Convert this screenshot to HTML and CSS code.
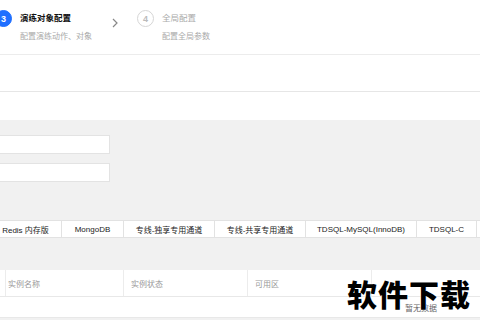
FILE: index.html
```html
<!DOCTYPE html>
<html lang="zh-CN">
<head>
    <meta charset="UTF-8">
    <meta name="viewport" content="width=device-width, initial-scale=1.0">
    <title>演练对象配置</title>
    <link rel="stylesheet" href="styles.css">
</head>
<body>
    <div class="steps">
        <div class="step step-active">
            <div class="step-num">3</div>
            <div class="step-text">
                <div class="step-title">演练对象配置</div>
                <div class="step-desc">配置演练动作、对象</div>
            </div>
        </div>
        <div class="step-arrow">
            <svg width="8" height="10" viewBox="0 0 8 10"><path d="M2 1 L6 5 L2 9" fill="none" stroke="#888" stroke-width="1.2"/></svg>
        </div>
        <div class="step">
            <div class="step-num">4</div>
            <div class="step-text">
                <div class="step-title">全局配置</div>
                <div class="step-desc">配置全局参数</div>
            </div>
        </div>
    </div>

    <div class="toolbar"></div>
    <div class="subbar"></div>

    <div class="main">
        <div class="field"></div>
        <div class="field"></div>

        <div class="tabs">
            <div class="tab tab-redis">Redis 内存版</div>
            <div class="tab tab-mongo">MongoDB</div>
            <div class="tab tab-line">专线-独享专用通道</div>
            <div class="tab tab-line">专线-共享专用通道</div>
            <div class="tab tab-tdsql">TDSQL-MySQL(InnoDB)</div>
            <div class="tab tab-tdsqlc">TDSQL-C</div>
            <div class="tab tab-more"></div>
        </div>

        <div class="table">
            <div class="table-head">
                <div class="th th-check"></div>
                <div class="th th-name">实例名称</div>
                <div class="th">实例状态</div>
                <div class="th">可用区</div>
                <div class="th th-rest"></div>
            </div>
            <div class="table-empty">暂无数据</div>
        </div>
    </div>

    <div class="watermark">软件下载</div>
</body>
</html>
```

FILE: styles.css
```css
body {
    font-family: 'Liberation Sans', 'Noto Sans CJK SC', sans-serif;
    margin: 0;
    padding: 0;
    width: 480px;
    height: 320px;
    overflow: hidden;
    background-color: #f1f1f1;
    color: #000;
    position: relative;
}

.steps {
    height: 55px;
    background-color: #fff;
    border-bottom: 1px solid #ececec;
    display: flex;
    align-items: flex-start;
    padding-top: 10px;
    box-sizing: border-box;
    margin-left: -5px;
}

.step {
    display: flex;
    gap: 8px;
}

.step-num {
    width: 15px;
    height: 15px;
    border-radius: 50%;
    border: 1px solid #d6d6d6;
    color: #bbb;
    font-size: 9px;
    font-weight: bold;
    display: flex;
    align-items: center;
    justify-content: center;
}

.step-active .step-num {
    background-color: #1f6fff;
    border-color: #1f6fff;
    color: #fff;
}

.step-title {
    font-size: 8.5px;
    line-height: 16px;
    color: #aaa;
}

.step-active .step-title {
    color: #111;
    font-weight: bold;
}

.step-desc {
    font-size: 8px;
    line-height: 12px;
    margin-top: 5px;
    color: #aaa;
}

.step-arrow {
    margin-left: 19px;
    margin-right: 18px;
    padding-top: 4px;
}

.toolbar {
    height: 36px;
    background-color: #fff;
    border-bottom: 1px solid #e6e6e6;
    box-shadow: 0 1px 2px rgba(0, 0, 0, 0.04);
}

.subbar {
    height: 28px;
    background-color: #fff;
}

.main {
    padding-top: 15px;
}

.field {
    width: 109px;
    height: 17px;
    background-color: #fff;
    border: 1px solid #e3e3e3;
    border-left: none;
    margin-bottom: 9px;
}

.tabs {
    display: flex;
    margin-top: 38px;
    margin-left: -10px;
}

.tab {
    height: 18px;
    box-sizing: border-box;
    background-color: #fff;
    border: 1px solid #e2e2e2;
    border-left: none;
    font-size: 8px;
    color: #222;
    display: flex;
    align-items: center;
    justify-content: center;
    flex-shrink: 0;
}

.tab-redis { width: 72px; }
.tab-mongo { width: 62px; }
.tab-line { width: 91px; }
.tab-tdsql { width: 111px; }
.tab-tdsqlc { width: 60px; }
.tab-more { width: 40px; }

.table {
    width: 842px;
    margin-top: 32px;
    background-color: #fff;
}

.table-head {
    display: flex;
    height: 26px;
    border-bottom: 1px solid #e8e8e8;
}

.th {
    width: 124px;
    box-sizing: border-box;
    border-left: 1px solid #ececec;
    font-size: 8px;
    color: #999;
    padding-left: 7px;
    display: flex;
    align-items: center;
    flex-shrink: 0;
}

.th-check {
    width: 5px;
    border-left: none;
    padding: 0;
}

.th-name {
    width: 118px;
    padding-left: 2px;
}

.th-rest {
    flex: 1;
}

.table-empty {
    height: 20px;
    font-size: 8px;
    color: #666;
    display: flex;
    align-items: center;
    justify-content: center;
    border-bottom: 1px solid #e8e8e8;
}

.watermark {
    position: absolute;
    left: 347px;
    top: 274px;
    font-family: 'Noto Sans CJK SC', sans-serif;
    font-size: 30px;
    font-weight: 900;
    line-height: 38px;
    color: #000;
    letter-spacing: 1px;
    text-shadow: 0 0 2px #fff, 0 0 2px #fff;
}
```
